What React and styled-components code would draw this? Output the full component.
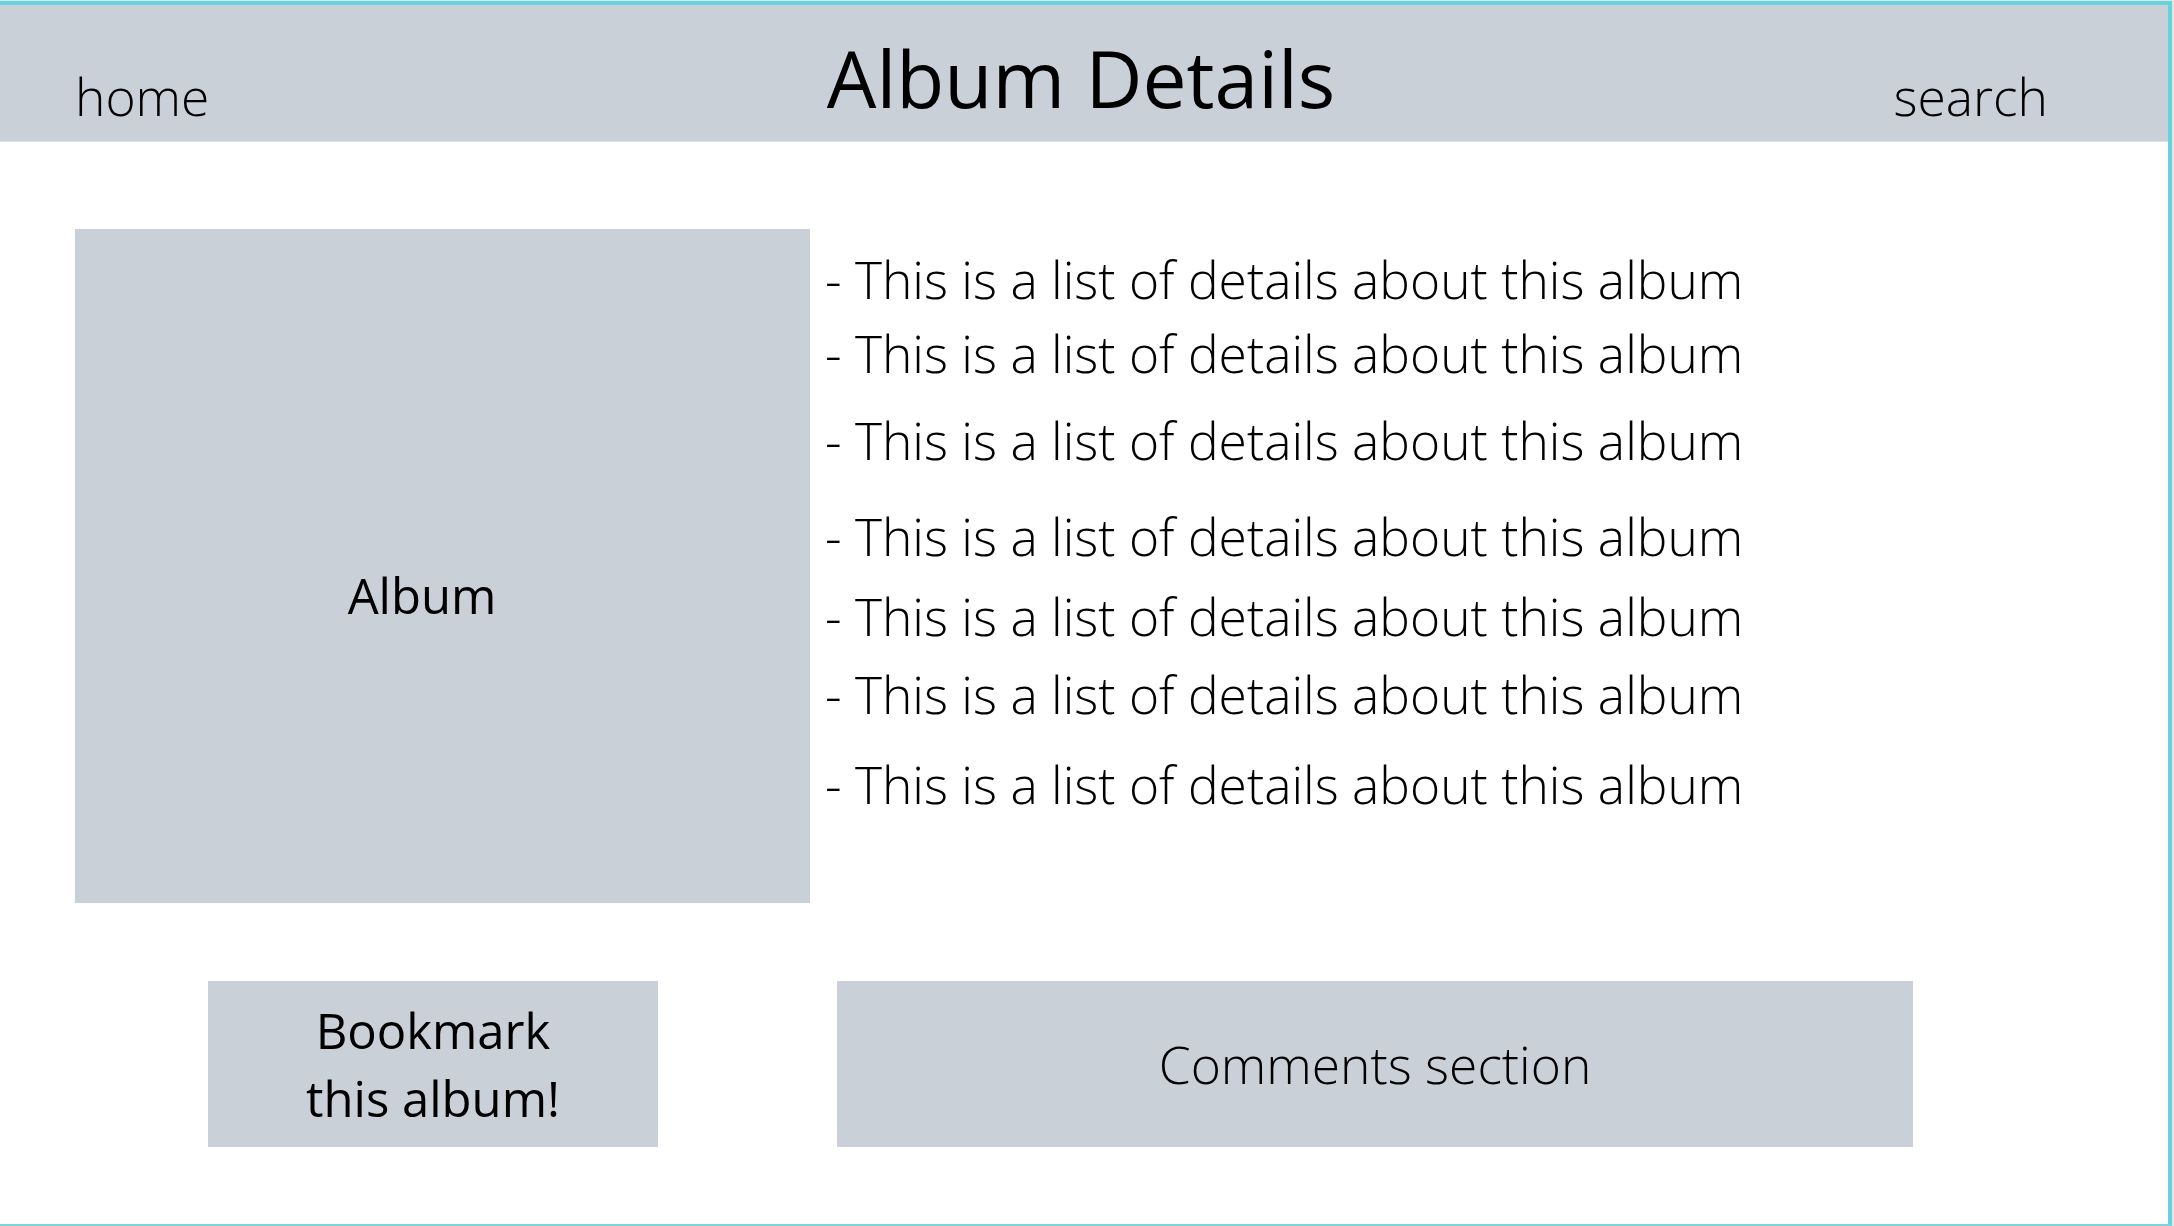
import React from 'react';
import styled, { createGlobalStyle } from 'styled-components';

const GlobalStyle = createGlobalStyle`
  * {
    box-sizing: border-box;
  }

  body {
    margin: 0;
    background: #e2e4e6;
    font-family: 'Open Sans', 'Liberation Sans', sans-serif;
    color: #000;
  }
`;

const details = [
  { id: 1, gap: 0 },
  { id: 2, gap: 22 },
  { id: 3, gap: 35 },
  { id: 4, gap: 44 },
  { id: 5, gap: 28 },
  { id: 6, gap: 26 },
  { id: 7, gap: 38 },
];

const App = () => {
  return (
    <>
      <GlobalStyle />
      <Page>
        <Header>
          <NavLink $side='left'>home</NavLink>
          <Title>Album Details</Title>
          <NavLink $side='right'>search</NavLink>
        </Header>

        <Main>
          <TopRow>
            <AlbumCover>
              <AlbumLabel>Album</AlbumLabel>
            </AlbumCover>
            <DetailList>
              {details.map((item) => (
                <DetailItem key={item.id} $gap={item.gap}>
                  - This is a list of details about this album
                </DetailItem>
              ))}
            </DetailList>
          </TopRow>

          <BottomRow>
            <BookmarkButton>
              Bookmark
              <br />
              this album!
            </BookmarkButton>
            <CommentsBox>Comments section</CommentsBox>
          </BottomRow>
        </Main>
      </Page>
    </>
  );
};

export default App;

const Page = styled.div`
  width: 2172px;
  height: 1225px;
  margin-top: 1px;
  background: #ffffff;
  border-top: 4px solid #66d4de;
  border-right: 4px solid #66d4de;
  border-bottom: 2px solid #7fd3db;
  display: flex;
  flex-direction: column;
  overflow: hidden;
`;

const Header = styled.header`
  display: grid;
  grid-template-columns: 1fr auto 1fr;
  align-items: start;
  height: 137px;
  background: #c9d0d8;
  border-bottom: 1px solid #dde1e6;
`;

const NavLink = styled.a`
  font-size: 51.5px;
  font-weight: 300;
  line-height: 52px;
  margin-top: 65px;
  color: #000;
  cursor: pointer;
  justify-self: ${({ $side }) => ($side === 'left' ? 'start' : 'end')};
  padding-left: ${({ $side }) => ($side === 'left' ? '75px' : '0')};
  padding-right: ${({ $side }) => ($side === 'right' ? '120px' : '0')};
`;

const Title = styled.h1`
  margin: 33px 6px 0 0;
  font-size: 78.5px;
  font-weight: 400;
  line-height: 79px;
`;

const Main = styled.main`
  display: flex;
  flex-direction: column;
  padding-top: 87px;
`;

const TopRow = styled.section`
  display: flex;
  align-items: flex-start;
  padding-left: 75px;
`;

const AlbumCover = styled.div`
  width: 735px;
  height: 674px;
  background: #c9d0d8;
  display: flex;
  justify-content: center;
  align-items: flex-start;
  padding: 342px 41px 0 0;
`;

const AlbumLabel = styled.span`
  font-size: 49px;
  font-weight: 400;
  line-height: 49px;
`;

const DetailList = styled.ul`
  list-style: none;
  margin: 0 0 0 15px;
  padding: 24px 0 0;
  display: flex;
  flex-direction: column;
`;

const DetailItem = styled.li`
  font-size: 51.5px;
  font-weight: 300;
  line-height: 52px;
  white-space: nowrap;
  margin-top: ${({ $gap }) => `${$gap}px`};
`;

const BottomRow = styled.section`
  display: flex;
  gap: 179px;
  margin-top: 78px;
  padding-left: 208px;
`;

const BookmarkButton = styled.button`
  width: 450px;
  height: 166px;
  border: none;
  background: #c9d0d8;
  font-family: 'Open Sans', 'Liberation Sans', sans-serif;
  font-size: 49px;
  font-weight: 400;
  line-height: 68px;
  color: #000;
  text-align: center;
  padding: 0;
  cursor: pointer;
`;

const CommentsBox = styled.div`
  width: 1076px;
  height: 166px;
  background: #c9d0d8;
  display: flex;
  justify-content: center;
  align-items: center;
  font-size: 51.5px;
  font-weight: 300;
  line-height: 52px;
`;
